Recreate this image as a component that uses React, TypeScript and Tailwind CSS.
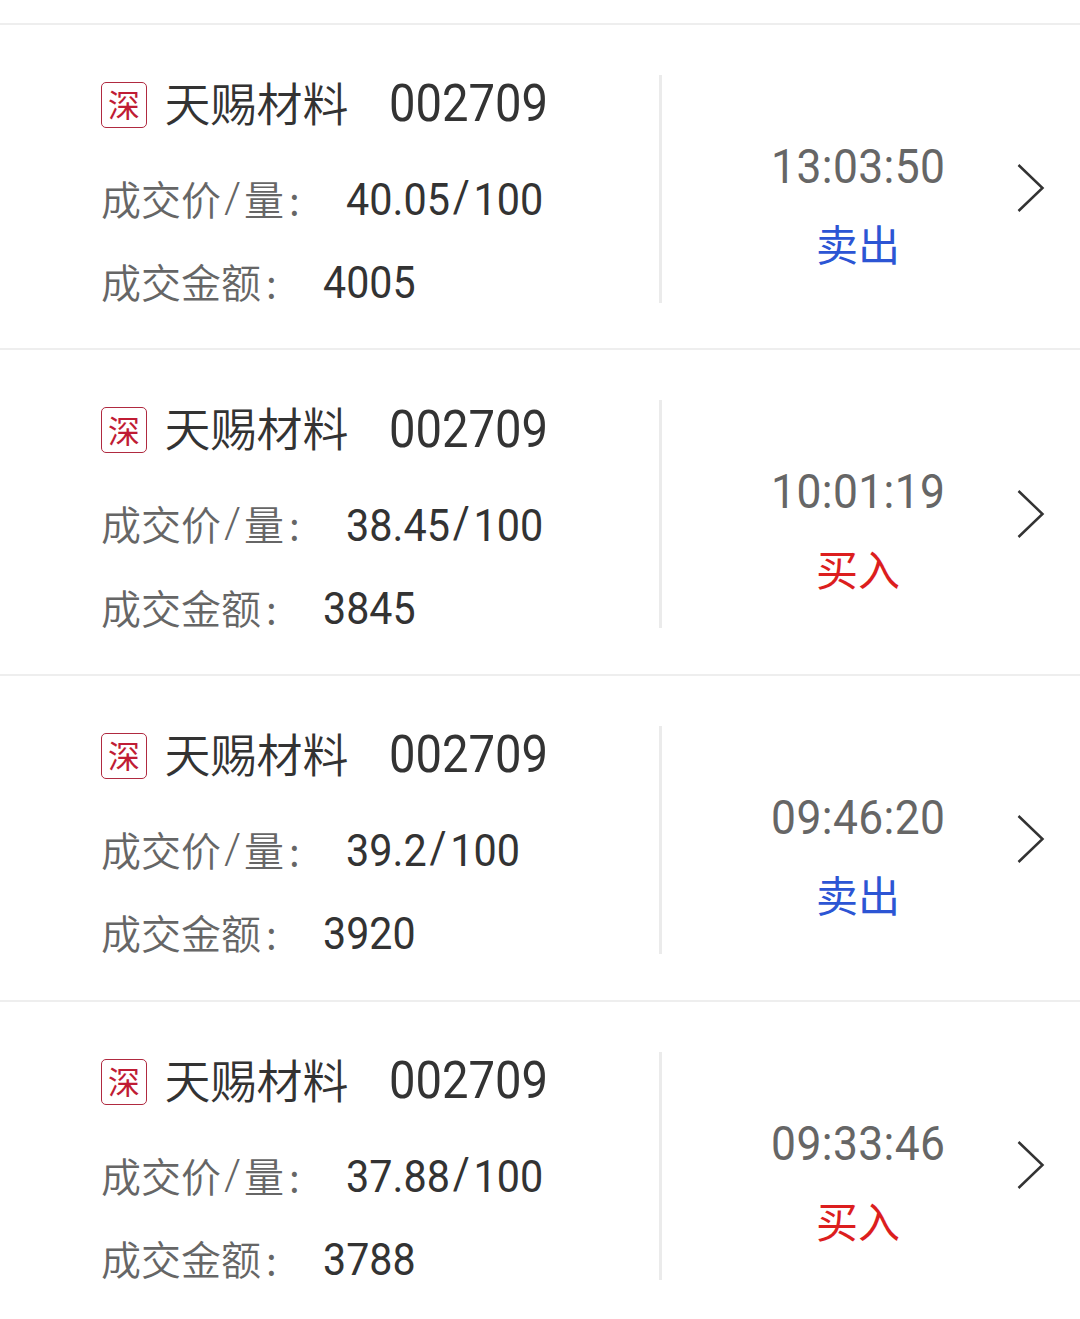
import React from "react";

type Trade = {
    name: string;
    code: string;
    price: string;
    volume: string;
    amount: string;
    time: string;
    side: "buy" | "sell";
};

const trades: Trade[] = [
    { name: "天赐材料", code: "002709", price: "40.05", volume: "100", amount: "4005", time: "13:03:50", side: "sell" },
    { name: "天赐材料", code: "002709", price: "38.45", volume: "100", amount: "3845", time: "10:01:19", side: "buy" },
    { name: "天赐材料", code: "002709", price: "39.2", volume: "100", amount: "3920", time: "09:46:20", side: "sell" },
    { name: "天赐材料", code: "002709", price: "37.88", volume: "100", amount: "3788", time: "09:33:46", side: "buy" },
];

const TradeRow = ({ trade }: { trade: Trade }) => (
    <div className="flex h-[325.7px] border-t-2 border-[#eeeeee] pt-[50px]">
        <div className="h-[228px] w-[662px] shrink-0 border-r-3 border-[#ebebeb] pl-[101px]">
            <div className="flex h-[60px] items-center whitespace-nowrap text-[#333333]">
                <span className="flex size-[46px] items-center justify-center rounded-[5px] border border-[#b02a40] pb-[3px] text-[32px] leading-none text-[#c01c34]">
                    深
                </span>
                <span className="ml-[17.5px] pb-[8px] text-[46px] leading-none font-[350]">{trade.name}</span>
                <span className="ml-[40px] origin-left scale-x-[0.925] pb-[2px] font-[Roboto,sans-serif] text-[51px] leading-none">
                    {trade.code}
                </span>
            </div>
            <div className="mt-[32.5px] flex h-[66px] items-center whitespace-nowrap">
                <span className="w-[245px] pb-[3px] text-[40px] leading-none font-[350] text-[#666666]">
                    成交价
                    <span className="mx-[3px] inline-block h-[40px] -translate-y-[3px] font-[Roboto,sans-serif] text-[43px] leading-[40px]">
                        /
                    </span>
                    量<span className="ml-[5px]">:</span>
                </span>
                <span className="origin-left scale-x-[0.93] font-[Roboto,sans-serif] text-[44.5px] leading-none text-[#333333]">
                    {trade.price}
                    <span className="ml-[3px] mr-[4px] inline-block -translate-y-[3px]">/</span>
                    {trade.volume}
                </span>
            </div>
            <div className="mt-[17px] flex h-[66px] items-center whitespace-nowrap">
                <span className="w-[222px] pb-[4px] text-[40px] leading-none font-[350] text-[#666666]">
                    成交金额<span className="ml-[5px]">:</span>
                </span>
                <span className="origin-left scale-x-[0.925] font-[Roboto,sans-serif] text-[44.5px] leading-none text-[#333333]">
                    {trade.amount}
                </span>
            </div>
        </div>
        <div className="flex w-[283px] flex-col items-end pt-[63px]">
            <span className="origin-right scale-x-[0.935] font-[Roboto,sans-serif] text-[47.5px] leading-[58px] tracking-[0.4px] text-[#666666]">
                {trade.time}
            </span>
            <span
                className={`mr-[45px] mt-[17px] text-[42px] leading-[60px] ${trade.side === "sell" ? "text-[#2c55d4]" : "text-[#dc1e1e]"}`}
            >
                {trade.side === "sell" ? "卖出" : "买入"}
            </span>
        </div>
        <svg className="ml-[71px] mt-[88.5px] h-[50px] w-[30px]" viewBox="0 0 30 50" fill="none" stroke="#333333" strokeWidth="2.5">
            <path d="M2.5 2L26.5 25L2.5 48" />
        </svg>
    </div>
);

const App = () => {
    return (
        <main className="h-[1319px] overflow-hidden bg-white pt-[22.6px] font-['Noto_Sans_CJK_SC',sans-serif]">
            {trades.map((trade) => (
                <TradeRow key={trade.time} trade={trade} />
            ))}
        </main>
    );
};

export default App;
